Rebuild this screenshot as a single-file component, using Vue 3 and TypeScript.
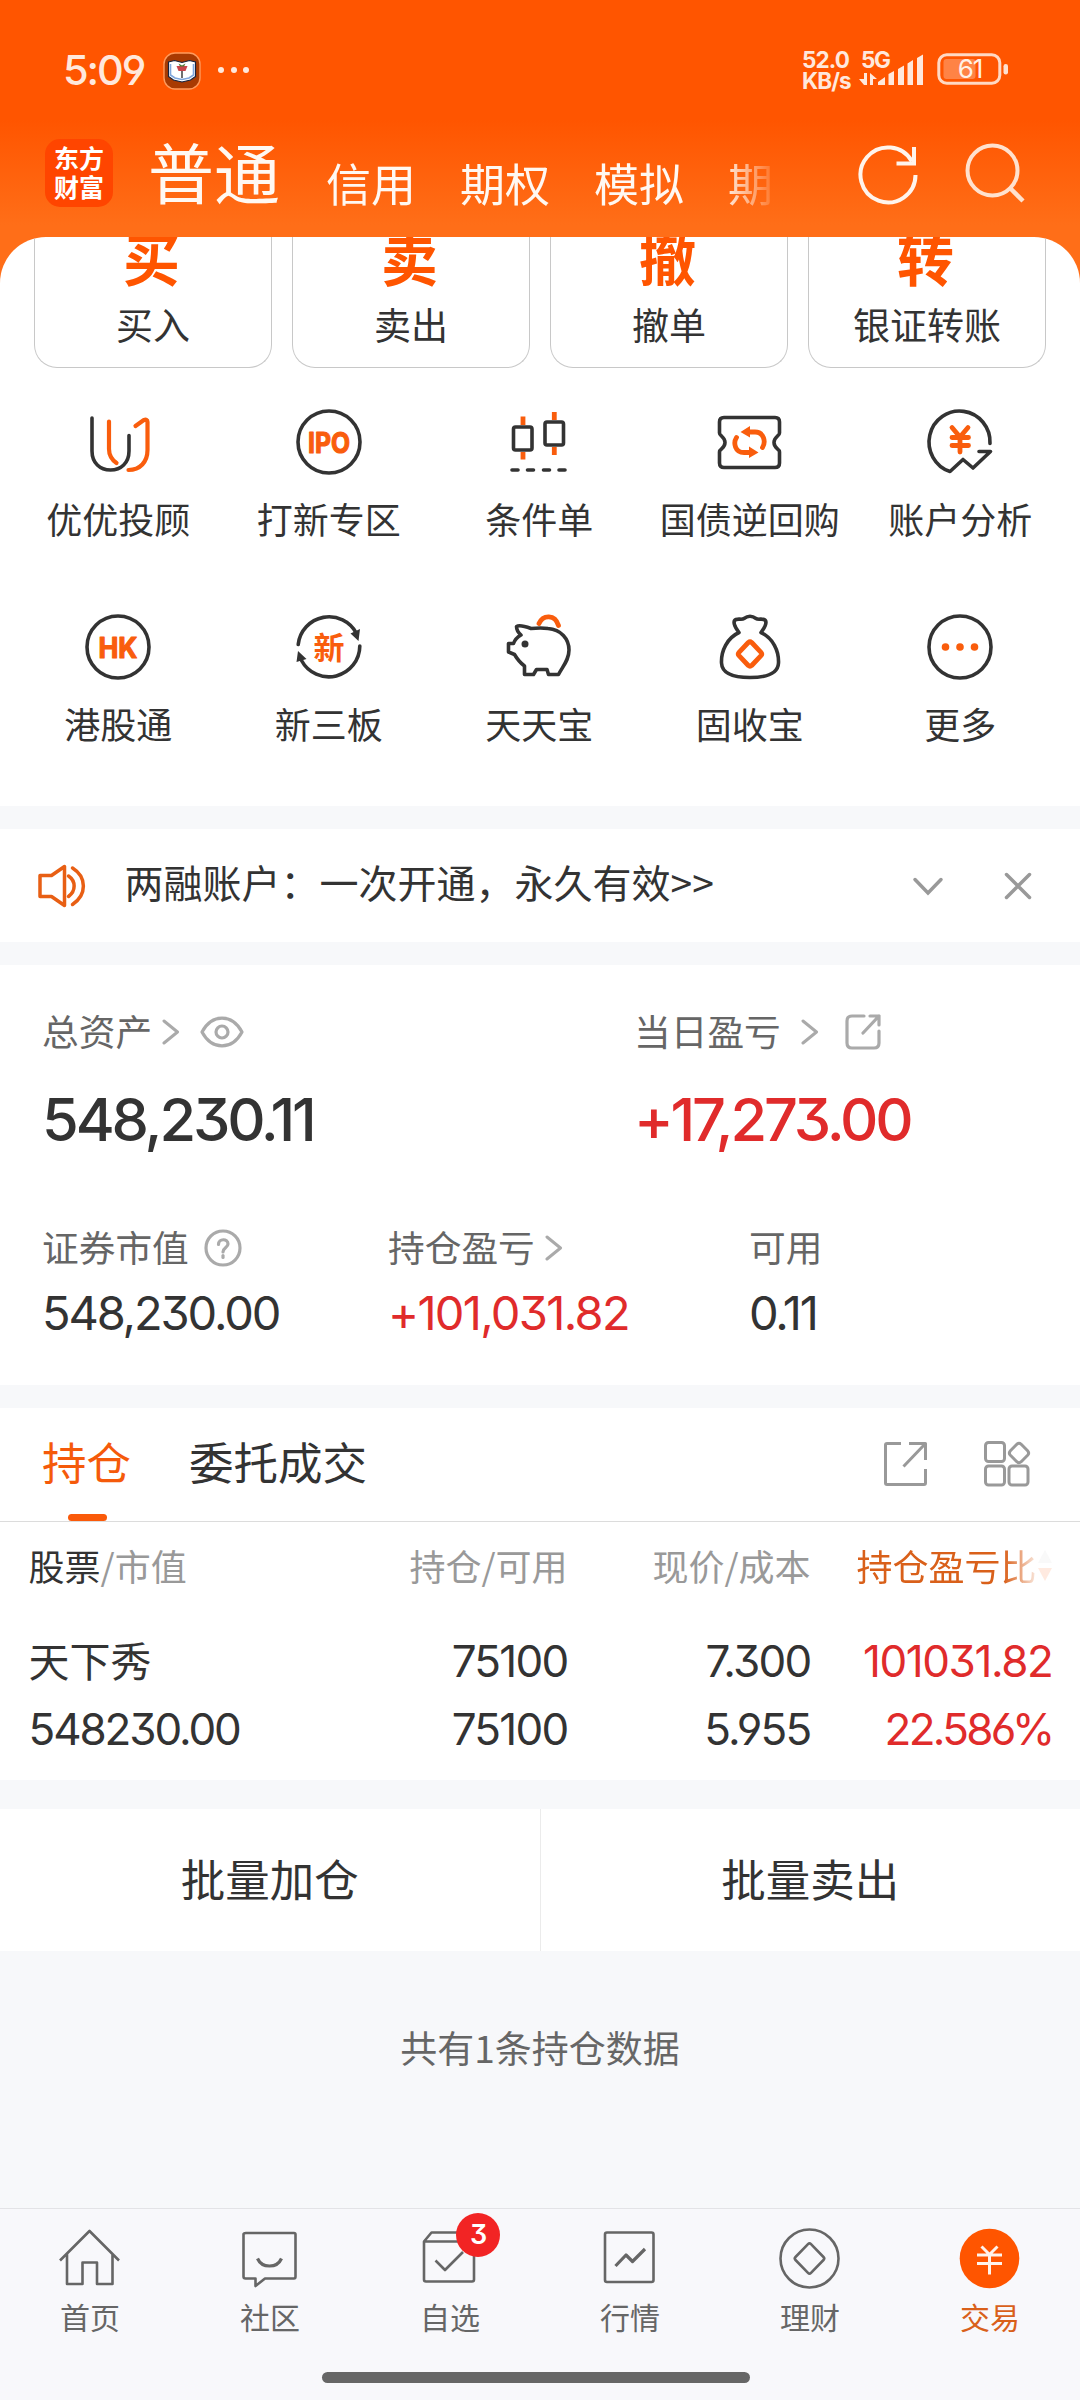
<script setup lang="ts">
interface IconEntry { label: string; icon: string }

const accountTabs: string[] = ['信用', '期权', '模拟', '期']

const trades: { glyph: string; label: string }[] = [
  { glyph: '买', label: '买入' },
  { glyph: '卖', label: '卖出' },
  { glyph: '撤', label: '撤单' },
  { glyph: '转', label: '银证转账' },
]

const tools: IconEntry[] = [
  { label: '优优投顾', icon: 'advisor' },
  { label: '打新专区', icon: 'ipo' },
  { label: '条件单', icon: 'candle' },
  { label: '国债逆回购', icon: 'repo' },
  { label: '账户分析', icon: 'analysis' },
  { label: '港股通', icon: 'hk' },
  { label: '新三板', icon: 'neeq' },
  { label: '天天宝', icon: 'pig' },
  { label: '固收宝', icon: 'bag' },
  { label: '更多', icon: 'more' },
]

const holding = {
  name: '天下秀', value: '548230.00', amount: '75100', usable: '75100',
  price: '7.300', cost: '5.955', profit: '101031.82', ratio: '22.586%',
}

const navItems: IconEntry[] = [
  { label: '首页', icon: 'home' },
  { label: '社区', icon: 'chat' },
  { label: '自选', icon: 'watch' },
  { label: '行情', icon: 'quote' },
  { label: '理财', icon: 'wealth' },
  { label: '交易', icon: 'trade' },
]
</script>

<template>
  <div class="page">
    <header class="header">
      <div class="status">
        <span class="time num">5:09</span>
        <svg class="app-badge" width="38" height="38" viewBox="0 0 38 38">
          <rect x="1" y="1" width="36" height="36" rx="11" fill="#a83a02" stroke="#ff9a5c" stroke-width="1.4" />
          <path d="M5.500 10l6-1.500 7.500 2 7.500-2 6 1.500v14.500l-5 3.500-8.500 2-8.500-2-5-3.500z" fill="#fff" stroke="#16233f" stroke-width="1.2" />
          <path d="M7.500 12v11l4.500 3 7 1.500 7-1.500 4.500-3V12" fill="none" stroke="#7fa6dc" stroke-width="1.600" />
          <path d="M19 17v9" stroke="#222" stroke-width="1.300" />
          <path d="M13.500 14h11l-2 5h-7z" fill="#c9434a" />
          <path d="M15.500 11.500l3.500 2 3.500-2-1.500 3h-4z" fill="#4d7a35" />
        </svg>
        <span class="dots"><i></i><i></i><i></i></span>
        <div class="speed num"><span>52.0</span><span>KB/s</span></div>
        <svg class="signal" width="66" height="38" viewBox="0 0 66 38">
          <text x="2" y="18" class="net">5G</text>
          <g fill="#ffe8dc">
            <path d="M5 23h3v12H5L0 29h5zM11 35V23l7 6h-4v6z" />
            <path d="M19 35v-3l7-5v8zM29.500 35V24l5.500-3v14zM39 35V19l6-3.500V35zM48.500 35V13.500l5.500-3.500v25zM58 35V8l6-3.500V35z" />
          </g>
        </svg>
        <svg class="battery" width="74" height="36" viewBox="0 0 74 36">
          <rect x="1.800" y="3.800" width="61" height="28.400" rx="8" fill="none" stroke="#ffd9c4" stroke-width="3" />
          <rect x="6.500" y="8" width="32" height="20" rx="3" fill="#ff8345" />
          <rect x="66.500" y="13" width="4.500" height="10.500" rx="2.200" fill="#ffe0cf" />
          <text x="33" y="27" text-anchor="middle" class="battery-text">61</text>
        </svg>
      </div>

      <div class="topnav">
        <div class="logo"><span>东方</span><span>财富</span></div>
        <span class="title">普通</span>
        <div class="tabs"><span v-for="(t, i) in accountTabs" :key="i">{{ t }}</span></div>
        <svg class="refresh" width="64" height="64" viewBox="0 0 64 64" fill="none" stroke="#fff4ec" stroke-width="4">
          <path d="M59.500 33A27.500 27.500 0 1 1 56 19.500" />
          <path d="M58 5V21.500H40.500" />
        </svg>
        <svg class="search" width="64" height="64" viewBox="0 0 64 64" fill="none" stroke="#ffe1ce" stroke-width="4">
          <circle cx="30.500" cy="30.500" r="25" /><path d="M49 49L61 61" stroke-width="4.500" />
        </svg>
      </div>
    </header>

    <div class="quick-wrap">
      <section class="quick">
        <div class="cards">
          <div v-for="c in trades" :key="c.glyph" class="card">
            <b>{{ c.glyph }}</b><span>{{ c.label }}</span>
          </div>
        </div>
        <div class="grid">
          <div v-for="t in tools" :key="t.icon" class="tool">
            <svg width="72" height="72" viewBox="0 0 72 72" class="tool-icon">
              <template v-if="t.icon === 'advisor'">
                <path d="M10 12V45C10 57 18 64 28.500 64S47 57 47 45V29.500" />
                <path class="o" d="M27 15.500V43C27 49 29.500 53.500 34.500 57M53.500 20L61.500 14.200Q65.500 12.500 65.500 16V44C65.500 56 58 64 46.500 64" />
              </template>
              <template v-else-if="t.icon === 'ipo'">
                <circle cx="36" cy="36" r="31" />
                <text x="36" y="46.500" text-anchor="middle" textLength="42" lengthAdjust="spacingAndGlyphs" class="badge-text">IPO</text>
              </template>
              <template v-else-if="t.icon === 'candle'">
                <rect x="10.500" y="21" width="18.500" height="23" rx="2" /><rect x="42" y="16" width="18.500" height="23" rx="2" />
                <path class="o wick" d="M20 10.500V19M20 46V53.500M51.300 6V14M51.300 41V49" />
                <path d="M9 64h6M24.500 64h6M40.500 64h6M56 64h6" />
              </template>
              <template v-else-if="t.icon === 'repo'">
                <path d="M10 11.500H61Q65.500 11.500 65.500 16V27Q65.500 28.500 63.500 30Q56.500 36.500 63.500 43Q65.500 44.500 65.500 46V57Q65.500 61.500 61 61.500H10Q5.500 61.500 5.500 57V46Q5.500 44.500 7.500 43Q14.500 36.500 7.500 30Q5.500 28.500 5.500 27V16Q5.500 11.500 10 11.500Z" />
                <path class="o thick" d="M34 26H41C50 26 52 36 48.500 41.500M37 46.500H30C21 46.500 19 37 22.500 31.500" />
                <path class="fill-o" d="M26.500 26l9.500-6v11.500zM44.500 46.500L35 40.500v11.500z" />
              </template>
              <template v-else-if="t.icon === 'analysis'">
                <path d="M66 37.500A30.500 31 0 1 0 26 65.500L39 53.500L49 62L66.500 45.500H55" />
                <path class="o thick" d="M28 21.500L36 31L44 21.500M28 31.500H44.500M28 39.500H44.500M36 31V46" />
              </template>
              <template v-else-if="t.icon === 'hk'">
                <circle cx="36" cy="36" r="31" />
                <text x="36" y="46.500" text-anchor="middle" textLength="39" lengthAdjust="spacingAndGlyphs" class="badge-text">HK</text>
              </template>
              <template v-else-if="t.icon === 'neeq'">
                <path d="M5.200 33.500A31 31 0 0 1 63.500 22.500M66.800 35A31 31 0 0 1 8.500 49.500" />
                <path class="fill-d" d="M65.500 30L57.500 22.500L67 18zM5 40l8.500 8L3.500 51z" />
                <text x="36" y="47.500" text-anchor="middle" class="neeq-text">新</text>
              </template>
              <template v-else-if="t.icon === 'pig'">
                <path d="M13.500 15.500Q17 13.500 28 17.500Q38 16.500 45 17.500C58 18.500 66 28 66 39C66 49 60 55 55.500 63.500H45.500L44 58.500H33.500L30.500 63.500H21.500V55Q16 51 11.500 43.500L5.500 41V32.500H10.500Q12.500 27 18 24Q13.500 20 13.500 15.500Z" />
                <circle class="fill-d" cx="22" cy="33" r="3.500" />
                <path class="o thick" d="M36 12.500C40 3.500 52 3 55.500 14.500" />
              </template>
              <template v-else-if="t.icon === 'bag'">
                <path d="M25 21.500C20 15 18.500 10 22 8.500C25 7.500 28 9 30 7.500C34 4.500 38 4.500 42 7.500C44 9 47 7.500 50 8.500C53.500 10 52 15 47 21.500C59 27 65 40 64.500 52C64 62 53 66.500 36 66.500S8 62 7.500 52C7 40 13 27 25 21.500Z" />
                <path class="o thick" d="M34.300 31.500Q36 30 37.700 31.500L47 41.300Q48.500 43 47 44.700L37.700 54.500Q36 56 34.300 54.500L25 44.700Q23.500 43 25 41.300Z" />
              </template>
              <template v-else>
                <circle cx="36" cy="36" r="31" />
                <g class="fill-o"><circle cx="21.500" cy="36" r="3.800" /><circle cx="36" cy="36" r="3.800" /><circle cx="50.500" cy="36" r="3.800" /></g>
              </template>
            </svg>
            <span>{{ t.label }}</span>
          </div>
        </div>
      </section>
    </div>

    <section class="notice">
      <svg class="speaker" width="52" height="46" viewBox="0 0 52 46">
        <path d="M4 12.500H15.500L28.500 3.500V42.500L15.500 33.500H4Z" />
        <path d="M32.500 13C40 18 40 28 32.500 33.500M36.500 5C51 14 51 32 36.500 41.500" />
      </svg>
      <p>两融账户：一次开通，永久有效&gt;&gt;</p>
      <svg class="n-down" width="34" height="34" viewBox="0 0 34 34"><path d="M4 10.500L17 24L30 10.500" /></svg>
      <svg class="n-close" width="34" height="34" viewBox="0 0 34 34"><path d="M5.500 5.500L28.500 28.500M28.500 5.500L5.500 28.500" /></svg>
    </section>

    <section class="assets">
      <div class="asset-top">
        <div class="a1">
          <div class="label">总资产
            <svg class="chev" width="18" height="26" viewBox="0 0 18 26"><path d="M2 2L15.500 13L2 24" /></svg>
            <svg class="eye" width="44" height="32" viewBox="0 0 44 32"><path d="M2 16C12-2.500 32-2.500 42 16C32 34.500 12 34.500 2 16Z" /><circle cx="22" cy="16" r="6" /></svg>
          </div>
          <div class="big num">548,230.11</div>
        </div>
        <div class="a2">
          <div class="label">当日盈亏
            <svg class="chev far" width="18" height="26" viewBox="0 0 18 26"><path d="M2 2L15.500 13L2 24" /></svg>
            <svg class="share-s" width="38" height="38" viewBox="0 0 38 38"><path d="M20 3H8Q3 3 3 8V30Q3 35 8 35H30Q35 35 35 30V18M26 3H35V12M35 3L19 20" /></svg>
          </div>
          <div class="big num red">+17,273.00</div>
        </div>
      </div>
      <div class="asset-sub">
        <div class="s1">
          <div class="label">证券市值
            <svg class="help" width="38" height="38" viewBox="0 0 38 38"><circle cx="19" cy="19" r="17" /><path d="M14.500 15.500C14.500 9 24 9.500 24 15C24 18.500 19 18.500 19 23" /><path d="M19 26.500V28.500" /></svg>
          </div>
          <div class="mid num">548,230.00</div>
        </div>
        <div class="s2">
          <div class="label">持仓盈亏
            <svg class="chev near" width="18" height="26" viewBox="0 0 18 26"><path d="M2 2L15.500 13L2 24" /></svg>
          </div>
          <div class="mid num red gain">+101,031.82</div>
        </div>
        <div class="s3">
          <div class="label">可用</div>
          <div class="mid num">0.11</div>
        </div>
      </div>
    </section>

    <section class="positions">
      <div class="pos-tabs">
        <span class="active">持仓</span>
        <span class="other">委托成交</span>
        <svg class="pi share-l" width="46" height="46" viewBox="0 0 46 46"><path d="M18 2.500H4Q2.500 2.500 2.500 4V42Q2.500 43.500 4 43.500H41Q42.500 43.500 42.500 42V28M26 2.500H42.500V19M42 3L20.500 25.500" /></svg>
        <svg class="pi" width="48" height="48" viewBox="0 0 48 48">
          <rect x="2.500" y="2.500" width="19" height="19" rx="3" /><rect x="2.500" y="26" width="19" height="19" rx="3" /><rect x="26" y="26" width="19" height="19" rx="3" />
          <path d="M33.800 4.300Q36 2.300 38.200 4.300L44.600 10.700Q46.700 13 44.600 15.300L38.200 21.700Q36 23.700 33.800 21.700L27.400 15.300Q25.300 13 27.400 10.700Z" />
        </svg>
      </div>
      <div class="row head">
        <span><em>股票</em>/市值</span><span>持仓/可用</span><span>现价/成本</span>
        <span class="sorted">持仓盈亏比<i class="tri"></i></span>
      </div>
      <div class="row data">
        <span class="name">{{ holding.name }}</span><span class="num">{{ holding.amount }}</span>
        <span class="num">{{ holding.price }}</span><span class="num red profit">{{ holding.profit }}</span>
      </div>
      <div class="row data">
        <span class="num worth">{{ holding.value }}</span><span class="num">{{ holding.usable }}</span>
        <span class="num">{{ holding.cost }}</span><span class="num red ratio">{{ holding.ratio }}</span>
      </div>
    </section>

    <section class="batch"><span>批量加仓</span><span>批量卖出</span></section>

    <p class="summary">共有1条持仓数据</p>

    <nav class="bottom">
      <div class="nav-row">
        <div v-for="n in navItems" :key="n.icon" class="nav-item" :class="{ on: n.icon === 'trade' }">
          <svg width="72" height="64" viewBox="0 0 72 64">
            <path v-if="n.icon === 'home'" d="M6 35.500L35.500 6L65 35.500M13 29V59H28.500V37.500H43V59H58.500V29" />
            <template v-else-if="n.icon === 'chat'">
              <path d="M12 8H60Q61.500 8 61.500 9.500V51.500Q61.500 53.500 60 53.500H31L21.500 61V53.500H11.500Q9.500 53.500 9.500 51.500V9.500Q9.500 8 12 8Z" />
              <path d="M23.500 33.500C28 43.500 43 43.500 47.500 33.500" stroke-width="3.200" />
            </template>
            <template v-else-if="n.icon === 'watch'">
              <path d="M10 16.500H60V54.500Q60 56.500 58 56.500H12Q10 56.500 10 54.500ZM10 16.500L17.500 7.500H52.500L60 16.500M21.500 35.500L31 45L49 27" />
            </template>
            <template v-else-if="n.icon === 'quote'">
              <rect x="11" y="7.500" width="48.500" height="49.500" rx="2" /><path d="M21.500 41L32 30L38.500 36.500L51 24" stroke-width="3.200" />
            </template>
            <template v-else-if="n.icon === 'wealth'">
              <circle cx="35.500" cy="33.500" r="29" /><path d="M34 19.200Q35.500 17.700 37 19.200L49.500 32Q51 33.500 49.500 35L37 47.800Q35.500 49.300 34 47.800L21.500 35Q20 33.500 21.500 32Z" />
            </template>
            <template v-else>
              <circle cx="35.500" cy="33.500" r="29.800" fill="#ff5500" stroke="none" />
              <path class="yen" d="M27.500 21.500L35.500 29.500L43.500 21.500M23 30H48M23 38.500H48M35.500 29.500V49.500" />
            </template>
          </svg>
          <span>{{ n.label }}</span>
          <b v-if="n.icon === 'watch'" class="num">3</b>
        </div>
      </div>
      <div class="home-bar"></div>
    </nav>
  </div>
</template>

<style>
body { margin: 0; }
</style>

<style scoped>
* { box-sizing: border-box; }
.page { width: 1080px; height: 2400px; overflow: hidden; display: flex; flex-direction: column; background: #f7f8fa; color: #333; font-family: "Noto Sans CJK SC", sans-serif; white-space: nowrap; }
.num { font-family: Inter, "Noto Sans CJK SC", sans-serif; font-feature-settings: "cv09", "cv03", "cv04"; letter-spacing: -0.04em; }
p { margin: 0; }
svg { flex: none; display: block; }
.red { color: #e02b2b; }

.header { height: 237px; flex: none; background: linear-gradient(#ff5500 0, #ff5500 120px, #ff6e18 225px); color: #fff8f2; }
.status { height: 130px; padding-top: 46px; display: flex; align-items: flex-start; color: #ffe8dc; }
.time { margin-left: 63px; width: 100px; line-height: 48px; font-size: 41.500px; font-weight: 500; letter-spacing: -0.05em; }
.app-badge { margin-top: 6px; }
.dots { display: flex; gap: 6.500px; margin: 21px 0 0 17px; }
.dots i { width: 6px; height: 6px; border-radius: 50%; background: #ffe8dc; }
.speed { margin-left: 553px; width: 57px; display: flex; flex-direction: column; font-size: 22.500px; font-weight: 700; line-height: 20.500px; padding-top: 4px; letter-spacing: -0.04em; }
.signal { margin-top: 4px; overflow: visible; }
.net { font: 700 22.500px Inter, sans-serif; fill: #ffe8dc; letter-spacing: -0.06em; }
.battery { margin: 5px 0 0 12px; }
.battery-text { font: 400 26px Inter, sans-serif; fill: #fff0e6; letter-spacing: -0.04em; }

.topnav { display: flex; align-items: flex-start; padding-left: 45px; }
.logo { margin-top: 9px; width: 68px; height: 68px; border-radius: 15px; background: #ff4500; display: flex; flex-direction: column; align-items: center; font-size: 25px; font-weight: 700; line-height: 29px; padding-top: 4px; color: #fff; }
.title { margin-left: 35px; width: 132px; font-size: 66px; line-height: 80px; font-weight: 400; }
.tabs { margin: 19px 0 0 46px; width: 454px; height: 70px; overflow: hidden; display: flex; gap: 44px; font-size: 45px; line-height: 68px; -webkit-mask-image: linear-gradient(90deg, #000 395px, transparent 454px); mask-image: linear-gradient(90deg, #000 395px, transparent 454px); }
.refresh { margin: 12px 0 0 76px; }
.search { margin: 10px 0 0 42px; }

.quick-wrap { background: #ff6e18; flex: none; }
.quick { height: 569px; background: #fff; border-radius: 46px 46px 0 0; overflow: hidden; }
.cards { display: grid; grid-template-columns: repeat(4, 1fr); gap: 20px; padding: 0 34px; height: 131px; }
.card { border: 1px solid #c8c8c8; border-top: 0; border-radius: 0 0 23px 23px; display: flex; flex-direction: column; align-items: center; }
.card b { margin: -11px 3px 0 0; font-size: 57px; line-height: 60px; color: #ff5500; font-weight: 700; }
.card span { margin-top: 18px; font-size: 37px; line-height: 40px; }
.grid { display: grid; grid-template-columns: repeat(5, 210.500px); row-gap: 73px; padding: 38px 0 0 13px; }
.tool { height: 132px; display: flex; flex-direction: column; align-items: center; }
.tool span { margin-top: 20px; font-size: 36px; line-height: 40px; }
.tool-icon { fill: none; stroke: #333; stroke-width: 3.600; stroke-linecap: round; stroke-linejoin: round; }
.tool-icon .o { stroke: #f95d0d; stroke-width: 4.200; }
.tool-icon .thick { stroke-width: 4.800; }
.tool-icon .wick { stroke-width: 4.800; stroke-linecap: butt; }
.tool-icon .fill-o { fill: #f95d0d; stroke: none; }
.tool-icon .fill-d { fill: #333; stroke: none; }
.badge-text { font: 700 28.500px Inter, sans-serif; fill: #f95d0d; stroke: #f95d0d; stroke-width: 1.2; }
.neeq-text { font: 700 31px "Noto Sans CJK SC", sans-serif; fill: #f95d0d; stroke: none; }

.notice { flex: none; margin-top: 23px; height: 113px; background: #fff; display: flex; align-items: center; padding: 0 45px 0 36px; }
.speaker { fill: none; stroke: #e85f14; stroke-width: 3.500; stroke-linecap: round; stroke-linejoin: round; }
.notice p { margin: -10px 0 0 36.500px; width: 785px; font-size: 39px; line-height: 50px; }
.n-down, .n-close { fill: none; stroke: #999; stroke-width: 3.500; stroke-linecap: round; }
.n-down { margin-left: 2px; }
.n-close { margin-left: 56px; }

.assets { flex: none; margin-top: 23px; height: 420px; background: #fff; padding: 45px 0 0 42px; }
.asset-top { display: flex; height: 216px; }
.a1 { width: 592px; }
.label { display: flex; align-items: center; height: 40px; font-size: 36.700px; line-height: 40px; color: #666; }
.label svg { fill: none; stroke: #aaa; stroke-width: 3.200; stroke-linejoin: round; stroke-linecap: round; margin-top: 4px; }
.label .chev { margin-left: 10px; stroke-width: 3; }
.label .chev.far { margin-left: 20px; }
.eye { margin-left: 20px; }
.share-s { margin-left: 25px; }
.help { margin-left: 15px; }
.big { margin-top: 34px; font-size: 59.500px; line-height: 70px; font-weight: 450; letter-spacing: -0.053em; }
.asset-sub { display: flex; }
.s1 { width: 346px; }
.s2 { width: 361px; }
.mid { margin-top: 22px; font-size: 47px; line-height: 50px; letter-spacing: -0.045em; }
.mid.gain { letter-spacing: -0.036em; }

.positions { flex: none; margin-top: 23px; height: 372px; background: #fff; }
.pos-tabs { height: 114px; border-bottom: 1.500px solid #dcdcdc; display: flex; align-items: center; padding: 0 49px 0 42px; font-size: 44.500px; line-height: 60px; }
.pos-tabs span { margin-top: -8px; }
.active { color: #f55a0a; position: relative; }
.active::after { content: ""; position: absolute; left: 26px; top: 83.500px; width: 39px; height: 6.500px; border-radius: 4px; background: #fa5a0a; }
.other { margin-left: 58px; flex: 1; }
.pi { fill: none; stroke: #999; stroke-width: 3; stroke-linejoin: round; margin-top: -2px; }
.share-l { margin-right: 54px; }
.row { display: grid; grid-template-columns: 332px 207px 243px 242px; padding-left: 28.500px; text-align: right; }
.row > span:first-child { text-align: left; }
.head { height: 99px; padding-top: 17px; font-size: 36px; line-height: 52px; color: #999; }
.head > span { height: 52px; }
.head em { font-style: normal; color: #333; }
.head .sorted { display: flex; justify-content: flex-end; color: #d9601a; -webkit-mask-image: linear-gradient(90deg, #000 193px, rgba(0, 0, 0, .12) 226px); mask-image: linear-gradient(90deg, #000 193px, rgba(0, 0, 0, .12) 226px); }
.tri { display: flex; flex-direction: column; justify-content: center; align-items: center; gap: 5px; width: 15px; margin-left: 1px; padding-top: 1px; }
.tri::before, .tri::after { content: ""; border: 7.500px solid transparent; }
.tri::before { border-top: 0; border-bottom: 13px solid #ccc; }
.tri::after { border-bottom: 0; border-top: 13px solid #ff5500; }
.data { height: 68px; padding-top: 14px; font-size: 44px; line-height: 52px; }
.data .name { font-size: 41px; line-height: 49px; }
.data .worth { letter-spacing: -0.048em; }
.data .profit { letter-spacing: -0.032em; }
.data .ratio { letter-spacing: -0.062em; }

.batch { flex: none; margin-top: 29px; height: 142px; background: #fff; display: flex; }
.batch span { flex: 1; text-align: center; font-size: 44.500px; line-height: 138px; }
.batch span + span { border-left: 1.500px solid #ebebeb; }
.summary { flex: none; height: 257px; padding-top: 71px; text-align: center; font-size: 37px; line-height: 50px; color: #666; }
.bottom { flex: none; height: 192px; background: #f8f8fb; border-top: 1.500px solid #e3e3e6; }
.nav-row { display: flex; padding-top: 16px; }
.nav-item { width: 180px; display: flex; flex-direction: column; align-items: center; position: relative; font-size: 30px; line-height: 40px; color: #666; }
.nav-item svg { fill: none; stroke: #666; stroke-width: 2.600; stroke-linejoin: round; }
.nav-item .yen { stroke: #fff3eb; stroke-width: 3; }
.nav-item span { margin-top: 7px; }
.nav-item b { position: absolute; left: 96px; top: -12px; width: 44px; height: 44px; border-radius: 50%; background: #f22424; color: #fff; font-size: 27px; line-height: 44px; text-align: center; font-weight: 600; }
.nav-item.on { color: #d9601a; }
.home-bar { margin: 36px 330px 0 322px; height: 11px; border-radius: 6px; background: #666; }
</style>
